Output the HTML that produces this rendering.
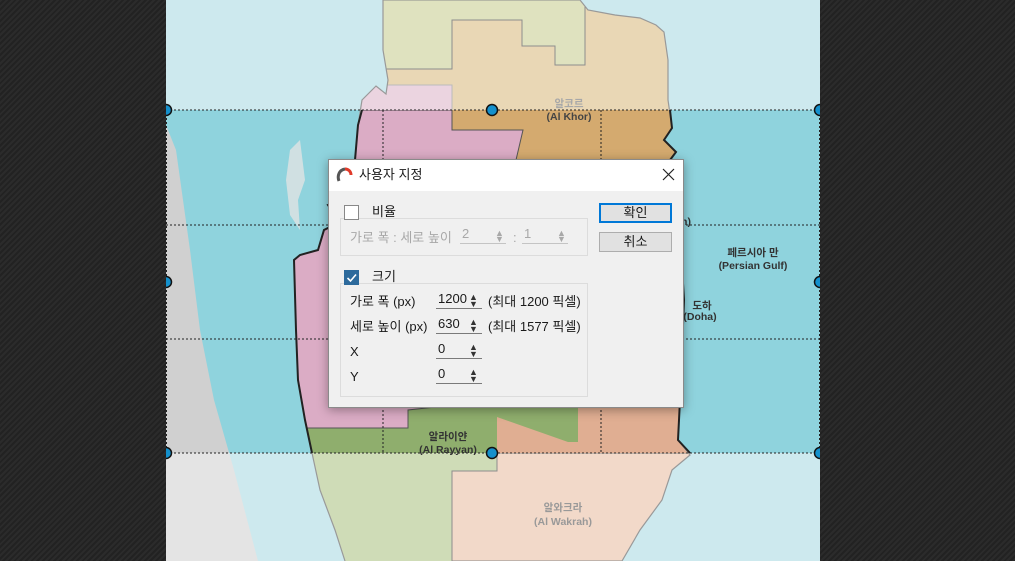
<!DOCTYPE html>
<html><head><meta charset="utf-8"><style>
html,body{margin:0;padding:0;width:1015px;height:561px;overflow:hidden;background:#262626;
background-image:repeating-linear-gradient(135deg,#2b2b2b 0 2px,#222 2px 4px);}
*{box-sizing:border-box}
.f{font-family:"Liberation Sans","Noto Sans CJK KR","NanumGothic",sans-serif}
#map{position:absolute;left:166px;top:0}
.dlg{position:absolute;left:328px;top:159px;width:356px;height:249px;background:#f0f0f0;border:1px solid #8a8a8a;box-shadow:0 2px 10px rgba(0,0,0,.35);font-size:13px;color:#1a1a1a}
.tb{position:absolute;left:0;top:0;width:100%;height:31px;background:#fff}
.a{position:absolute;white-space:nowrap;line-height:1}
.grp{position:absolute;border:1px solid #dcdcdc}
.fld{position:absolute;height:18px;border-bottom:1px solid #7a7a7a}
.dis{color:#a8a8a8}
.dis .fld{border-bottom-color:#c4c4c4}
.btn{position:absolute;left:270px;width:73px;height:20px;background:#e1e1e1;border:1px solid #adadad;text-align:center;line-height:18px;font-size:13px}
</style></head><body>
<svg id="map" width="654" height="561" viewBox="166 0 654 561">
<defs>
<clipPath id="pen"><path d="M383,0 L580,0 L588,10 L615,15 L640,18 L656,25 L664,32 L668,60 L668,100 L672,128 L664,140 L676,152 L670,160 L680,165 L678,200 L684,300 L680,400 L678,440 L690,455 L672,470 L662,500 L640,530 L622,561 L345,561 L335,530 L320,490 L312,453 L305,420 L298,380 L296,330 L294,260 L300,255 L318,250 L324,230 L340,222 L328,205 L352,196 L355,160 L358,125 L362,100 L376,86 L386,94 L388,80 L383,50 Z"/></clipPath>
<clipPath id="band"><rect x="166" y="110" width="654" height="343"/></clipPath>
</defs>
<rect x="166" y="0" width="654" height="561" fill="#cde9ee"/>
<path d="M166,125 L176,150 L190,250 L200,330 L214,400 L234,470 L258,561 L166,561Z" fill="#e4e4e4"/>
<g clip-path="url(#pen)">
<rect x="280" y="0" width="420" height="561" fill="#e9d7b5"/>
<path d="M340,0 L585,0 L585,65 L555,65 L555,46 L522,46 L522,20 L452,20 L452,69 L340,69Z" fill="#dfe2bf" stroke="#8d8d8d" stroke-width="1"/>
<rect x="340" y="85" width="112" height="30" fill="#ebd4e0" stroke="#bbb" stroke-width="1"/>
<path d="M280,453 L497,453 L497,471 L452,471 L452,561 L280,561Z" fill="#cfdcb7"/>
<path d="M452,471 L497,471 L497,453 L700,453 L700,561 L452,561Z" fill="#f2d9c9" stroke="#8d8d8d" stroke-width="1"/>
</g>
<rect x="166" y="110" width="654" height="343" fill="#8fd3dd"/>
<path d="M166,125 L176,150 L190,250 L200,330 L214,400 L234,470 L258,561 L166,561Z" fill="#d0d0d0" clip-path="url(#band)"/>
<g clip-path="url(#band)"><g clip-path="url(#pen)">
<rect x="280" y="0" width="420" height="561" fill="#d4aa6f"/>
<path d="M497,405 L700,405 L700,453 L497,453Z" fill="#e0ae92"/>
<path d="M280,410 L578,405 L578,442 L568,442 L497,417 L497,453 L280,453Z" fill="#8fae6d"/>
<path d="M280,110 L452,110 L452,130 L523,130 L516,160 L510,190 L500,400 L408,410 L408,428 L280,428Z" fill="#dbacc5" stroke="#555" stroke-width="1"/>
</g></g>
<path d="M383,0 L383,50 L388,80 L386,94 L376,86 L362,100 L358,125 L355,160 L352,196 L328,205 L340,222 L324,230 L318,250 L300,255 L294,260 L296,330 L298,380 L305,420 L312,453 L320,490 L335,530 L345,561 M580,0 L588,10 L615,15 L640,18 L656,25 L664,32 L668,60 L668,100 L672,128 L664,140 L676,152 L670,160 L680,165 L678,200 L684,300 L680,400 L678,440 L690,455 L672,470 L662,500 L640,530 L622,561" fill="none" stroke="#999" stroke-width="1.2"/>
<path d="M362,110 L358,125 L355,160 L352,196 L328,205 L340,222 L324,230 L318,250 L300,255 L294,260 L296,330 L298,380 L305,420 L312,453 M670,110 L672,128 L664,140 L676,152 L670,160 L680,165 L678,200 L684,300 L680,400 L678,440 L690,453" fill="none" stroke="#222" stroke-width="2"/>
<path d="M290,150 L300,140 L305,180 L298,200 L300,230 L290,215 L286,180Z" fill="#e0e4e4" opacity=".8"/>
<g stroke="#222" stroke-width="1" stroke-dasharray="2,2" fill="none">
<path d="M166,110H820M166,225H820M166,339H820M166,453H820M383,110V453M601,110V453M166.5,110V453M819.5,110V453"/>
</g>
<g fill="#1490cc" stroke="#111" stroke-width="1.5">
<circle cx="166" cy="110" r="5.5"/><circle cx="492" cy="110" r="5.5"/><circle cx="820" cy="110" r="5.5"/>
<circle cx="166" cy="282" r="5.5"/><circle cx="820" cy="282" r="5.5"/>
<circle cx="166" cy="453" r="5.5"/><circle cx="492" cy="453" r="5.5"/><circle cx="820" cy="453" r="5.5"/>
</g>
<g class="f" font-size="10.5" font-weight="bold" text-anchor="middle">
<text x="569" y="107" fill="#a8a8a8">알코르</text><text x="569" y="120" fill="#444">(Al Khor)</text>
<text x="753" y="256" fill="#333">페르시아 만</text><text x="753" y="269" fill="#333">(Persian Gulf)</text>
<text x="702" y="309" fill="#333">도하</text><text x="700" y="320" fill="#333">(Doha)</text>
<text x="686" y="225" fill="#333">n)</text>
<text x="448" y="440" fill="#333">알라이얀</text><text x="448" y="453" fill="#333">(Al Rayyan)</text>
<text x="563" y="511" fill="#999">알와크라</text><text x="563" y="525" fill="#999">(Al Wakrah)</text>
</g>
</svg>
<div class="dlg f">
<div class="tb"></div>
<svg style="position:absolute;left:7px;top:7px" width="17" height="16" viewBox="0 0 17 16"><path d="M3,14 C1,9 3,3 9,2" stroke="#555" stroke-width="3" fill="none"/><path d="M9,2 C13,2 15,5 15,8" stroke="#e03a2a" stroke-width="3" fill="none"/></svg>
<div class="a" style="left:30px;top:8px;font-size:13px">사용자 지정</div>
<svg style="position:absolute;left:333px;top:8px" width="13" height="13"><path d="M1,1L12,12M12,1L1,12" stroke="#222" stroke-width="1.2"/></svg>

<div class="grp" style="left:11px;top:58px;width:248px;height:38px"></div>
<div style="position:absolute;left:15px;top:45px;width:15px;height:15px;background:#fff;border:1px solid #888"></div>
<div class="a" style="left:38px;top:45px;background:#f0f0f0;padding:0 5px">비율</div>
<div class="dis">
<div class="a" style="left:21px;top:71px">가로 폭 : 세로 높이</div>
<div class="fld" style="left:131px;top:66px;width:46px"><span class="a" style="left:2px;top:1px">2</span><span class="a" style="left:35px;top:3px;font-size:9px">▲</span><span class="a" style="left:35px;top:9px;font-size:9px">▼</span></div>
<div class="a" style="left:184px;top:71px">:</div>
<div class="fld" style="left:193px;top:66px;width:46px"><span class="a" style="left:2px;top:1px">1</span><span class="a" style="left:35px;top:3px;font-size:9px">▲</span><span class="a" style="left:35px;top:9px;font-size:9px">▼</span></div>
</div>

<div class="grp" style="left:11px;top:123px;width:248px;height:114px"></div>
<div style="position:absolute;left:15px;top:110px;width:15px;height:15px;background:#2d6a9c;border:1px solid #2d6a9c"><svg width="13" height="13" style="position:absolute;left:0;top:0"><path d="M2.5,7 L5.5,10 L11,3.5" stroke="#fff" stroke-width="1.6" fill="none"/></svg></div>
<div class="a" style="left:38px;top:110px;background:#f0f0f0;padding:0 5px">크기</div>

<div class="a" style="left:21px;top:135px">가로 폭 (px)</div>
<div class="fld" style="left:107px;top:131px;width:46px"><span class="a" style="left:2px;top:1px">1200</span><span class="a" style="left:33px;top:2px;font-size:9px;color:#333">▲</span><span class="a" style="left:33px;top:9px;font-size:9px;color:#333">▼</span></div>
<div class="a" style="left:159px;top:135px">(최대 1200 픽셀)</div>
<div class="a" style="left:21px;top:160px">세로 높이 (px)</div>
<div class="fld" style="left:107px;top:156px;width:46px"><span class="a" style="left:2px;top:1px">630</span><span class="a" style="left:33px;top:2px;font-size:9px;color:#333">▲</span><span class="a" style="left:33px;top:9px;font-size:9px;color:#333">▼</span></div>
<div class="a" style="left:159px;top:160px">(최대 1577 픽셀)</div>
<div class="a" style="left:21px;top:185px">X</div>
<div class="fld" style="left:107px;top:181px;width:46px"><span class="a" style="left:2px;top:1px">0</span><span class="a" style="left:33px;top:2px;font-size:9px;color:#333">▲</span><span class="a" style="left:33px;top:9px;font-size:9px;color:#333">▼</span></div>
<div class="a" style="left:21px;top:210px">Y</div>
<div class="fld" style="left:107px;top:206px;width:46px"><span class="a" style="left:2px;top:1px">0</span><span class="a" style="left:33px;top:2px;font-size:9px;color:#333">▲</span><span class="a" style="left:33px;top:9px;font-size:9px;color:#333">▼</span></div>

<div class="btn" style="top:43px;border:2px solid #0078d7;line-height:16px">확인</div>
<div class="btn" style="top:72px">취소</div>
</div>
</body></html>
